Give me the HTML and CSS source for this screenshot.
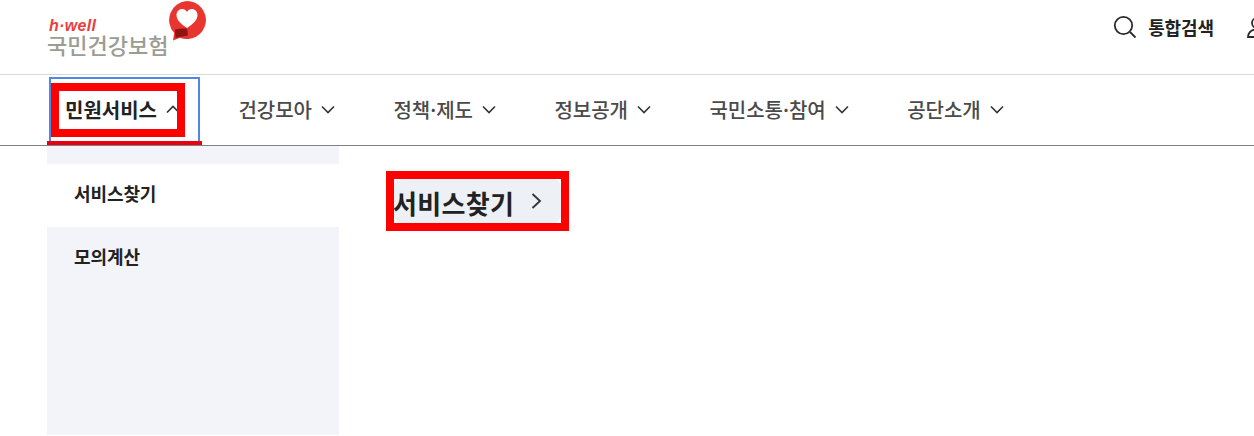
FILE: index.html
```html
<!DOCTYPE html>
<html lang="ko">
<head>
  <meta charset="UTF-8">
  <meta name="viewport" content="width=device-width, initial-scale=1.0">
  <title>국민건강보험</title>
  <link rel="stylesheet" href="styles.css">
</head>
<body>
  <header class="top-bar">
    <a class="logo" href="#">
      <span class="logo-text">
        <em class="logo-hwell">h·well</em>
        <span class="logo-name">국민건강보험</span>
      </span>
      <svg class="logo-mark" width="40" height="42" viewBox="0 0 40 42">
        <path d="M20 1a19 19 0 1 1-7 36.700L6 40.500l1.200-7.600A19 19 0 0 1 20 1z" fill="#e8352f"/>
        <path d="M20 28c-7-4.500-10.500-8.500-10.500-13 0-3.600 2.600-6 5.700-6 2 0 3.700 1 4.800 3 1.100-2 2.800-3 4.800-3 3.100 0 5.700 2.400 5.700 6 0 4.500-3.500 8.500-10.500 13z" fill="#fff"/>
        <path d="M8 29.500l6.500-1 5.500 0 1 7-8.500 1.500-4 1z" fill="#8f1414"/>
      </svg>
    </a>
    <div class="tools">
      <a class="search" href="#">
        <svg width="24" height="24" viewBox="0 0 24 24" fill="none" stroke="#2b2b2b" stroke-width="1.800">
          <circle cx="10.500" cy="10.500" r="8.700"/>
          <path d="M17 17l5.500 5.500"/>
        </svg>
        <span>통합검색</span>
      </a>
      <svg class="user" width="24" height="24" viewBox="0 0 24 24" fill="none" stroke="#2b2b2b" stroke-width="1.800">
        <circle cx="12" cy="8" r="5"/>
        <path d="M3 22c.5-5 4-7.500 9-7.500s8.500 2.500 9 7.500z"/>
      </svg>
    </div>
  </header>

  <nav class="gnb">
    <a class="gnb-item active" href="#">
      민원서비스
      <svg class="chev" width="14" height="9" viewBox="0 0 14 9"><path d="M1 7.500l6-6 6 6"/></svg>
      <span class="mark mark-gnb"></span>
    </a>
    <a class="gnb-item" href="#">건강모아 <svg class="chev" width="14" height="9" viewBox="0 0 14 9"><path d="M1 1.500l6 6 6-6"/></svg></a>
    <a class="gnb-item" href="#">정책·제도 <svg class="chev" width="14" height="9" viewBox="0 0 14 9"><path d="M1 1.500l6 6 6-6"/></svg></a>
    <a class="gnb-item" href="#">정보공개 <svg class="chev" width="14" height="9" viewBox="0 0 14 9"><path d="M1 1.500l6 6 6-6"/></svg></a>
    <a class="gnb-item" href="#">국민소통·참여 <svg class="chev" width="14" height="9" viewBox="0 0 14 9"><path d="M1 1.500l6 6 6-6"/></svg></a>
    <a class="gnb-item" href="#">공단소개 <svg class="chev" width="14" height="9" viewBox="0 0 14 9"><path d="M1 1.500l6 6 6-6"/></svg></a>
  </nav>

  <section class="panel">
    <ul class="side">
      <li class="side-item current">서비스찾기</li>
      <li class="side-item">모의계산</li>
    </ul>
    <div class="content">
      <a class="service-link" href="#">
        <span class="service-text">서비스찾기</span>
        <svg width="11" height="18" viewBox="0 0 11 18" fill="none" stroke="#333" stroke-width="1.800"><path d="M1.500 2l7.500 7-7.500 7"/></svg>
        <span class="mark mark-link"></span>
      </a>
    </div>
  </section>
</body>
</html>
```

FILE: styles.css
```css
* { margin: 0; padding: 0; box-sizing: border-box; }

html, body { height: 100%; overflow: hidden; }

body {
  font-family: "Noto Sans CJK KR", "Noto Sans", sans-serif;
  background: #fff;
  color: #222;
}

a { color: inherit; text-decoration: none; }

.top-bar {
  height: 75px;
  border-bottom: 1px solid #d9d9d9;
  padding-left: 47px;
  display: flex;
  justify-content: space-between;
}

.logo { display: flex; align-items: flex-start; }

.logo-text {
  display: flex;
  flex-direction: column;
  padding-top: 18px;
}

.logo-hwell {
  font-family: "Liberation Sans", sans-serif;
  font-weight: 700;
  font-size: 16px;
  line-height: 15px;
  letter-spacing: 0.3px;
  padding-left: 2px;
  color: #e8403c;
}

.logo-name {
  font-size: 22px;
  font-weight: 500;
  line-height: 22px;
  color: #9b9c94;
}

.logo-mark { margin: 0 0 0 -1px; }

.tools {
  display: flex;
  align-items: flex-start;
  gap: 31px;
  margin-right: -15px;
  padding-top: 15px;
}

.search {
  display: flex;
  align-items: center;
  gap: 11px;
  font-size: 18px;
  font-weight: 700;
  line-height: 24px;
  letter-spacing: -0.1px;
  color: #222;
}

.gnb {
  height: 71px;
  border-bottom: 1px solid #808080;
  padding-left: 49px;
  display: flex;
  align-items: flex-start;
  gap: 22.4px;
}

.gnb-item {
  position: relative;
  height: 66px;
  margin-top: 2px;
  padding: 0 20px 2px 16px;
  display: flex;
  align-items: center;
  gap: 9px;
  font-size: 20px;
  font-weight: 500;
  color: #4a4a4a;
  white-space: nowrap;
}

.gnb-item.active {
  font-weight: 700;
  color: #222;
  outline: 2px solid #4f86e8;
  outline-offset: -2px;
}

.gnb-item.active::after {
  content: "";
  position: absolute;
  left: -2px;
  right: -2px;
  bottom: -2px;
  height: 4px;
  background: #e60012;
  z-index: 1;
}

.chev { fill: none; stroke: #333; stroke-width: 1.6; }

.mark { position: absolute; border: 8px solid #f00; }

.mark-gnb { left: 2px; top: 6px; width: 134px; height: 54px; }

.panel {
  display: flex;
  height: 289px;
  padding-left: 47px;
}

.side {
  width: 292px;
  list-style: none;
  background: #f3f4f9;
  padding-top: 18px;
}

.side-item {
  height: 63px;
  padding: 11px 0 0 27px;
  font-size: 18px;
  font-weight: 700;
  line-height: 36px;
  letter-spacing: -0.1px;
  color: #222;
}

.side-item.current { background: #fff; }

.content { padding: 33px 0 0 55px; }

.service-link {
  position: relative;
  display: flex;
  align-items: center;
  gap: 17px;
  width: 167px;
  height: 44px;
  border-radius: 8px;
  background: #edf0f5;
  font-size: 26px;
  font-weight: 700;
  color: #222;
}

.service-text {
  margin: 2px 0 0 -1px;
  letter-spacing: 0.3px;
}

.mark-link { left: -8px; top: -8px; width: 183px; height: 60px; }
```
